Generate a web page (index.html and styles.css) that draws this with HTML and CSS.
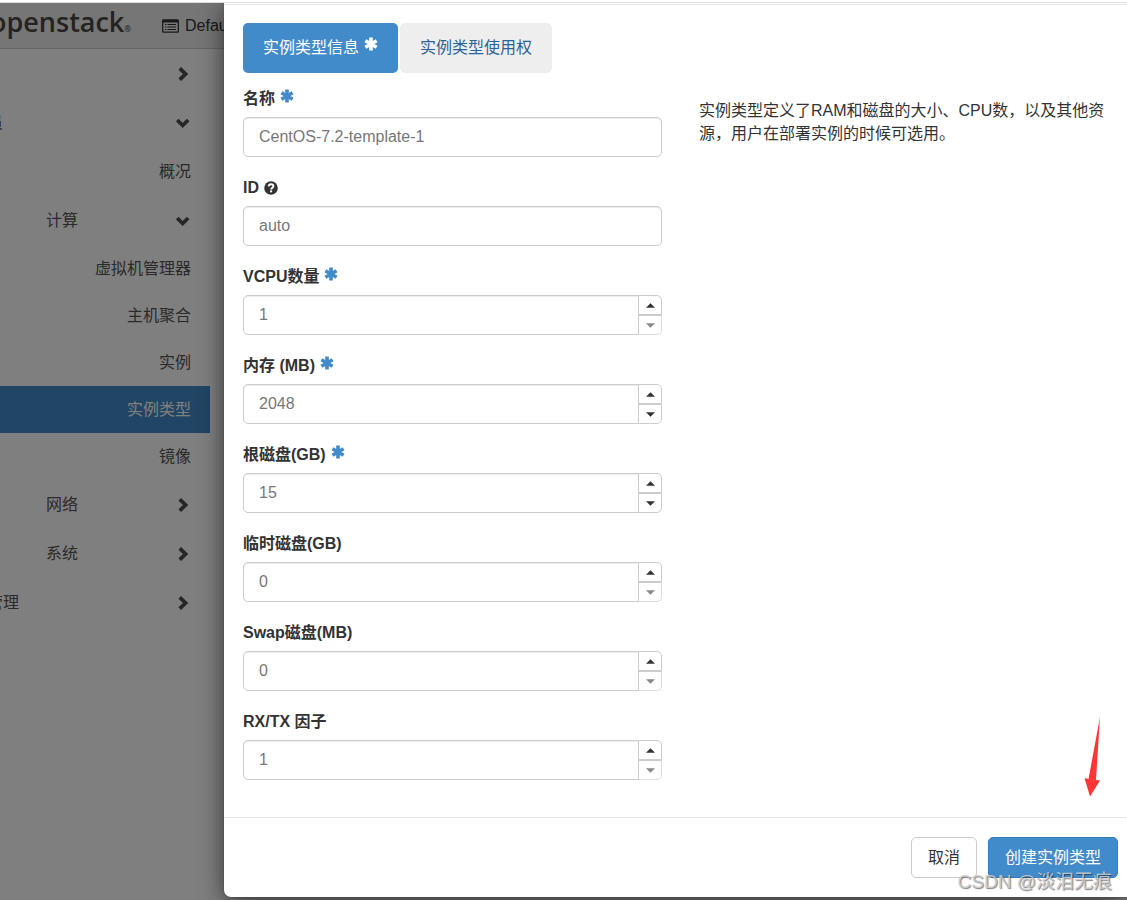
FILE: index.html
```
<!DOCTYPE html>
<html lang="zh-CN">
<head>
	<meta charset="UTF-8">
	<meta name="viewport" content="width=device-width, initial-scale=1">
	<title>创建实例类型</title>
	<link rel="stylesheet" href="styles.css">
</head>
<body>
	<!-- 公用图标 -->
	<svg class="sprite" aria-hidden="true">
		<symbol id="i-right" viewBox="0 0 12 14"><path d="M1.700 1.300 7.600 7l-5.900 5.700" fill="none" stroke="currentColor" stroke-width="3.700"/></symbol>
		<symbol id="i-down" viewBox="0 0 14 12"><path d="M1.200 3 6.700 8.500 12.200 3" fill="none" stroke="currentColor" stroke-width="3.700"/></symbol>
		<symbol id="i-star" viewBox="0 0 14 14"><path d="M7 .5v13M1.400 3.800l11.200 6.400M12.600 3.800 1.400 10.200" fill="none" stroke="currentColor" stroke-width="3.600"/></symbol>
		<symbol id="i-help" viewBox="0 0 14 14"><circle cx="7" cy="7" r="6.800" fill="currentColor"/><path d="M4.700 5.400C4.800 3.900 5.700 3.200 7 3.200c1.400 0 2.400.8 2.400 2 0 1.700-2.300 1.600-2.300 3.300" fill="none" stroke="#fff" stroke-width="1.900"/><path d="M6.100 9.400h2v1.900h-2z" fill="#fff"/></symbol>
		<symbol id="i-list" viewBox="0 0 17 14"><path d="M1.500 1h14a.8.8 0 0 1 .8.8v10.600a.8.8 0 0 1-.8.8h-14a.8.8 0 0 1-.8-.8V1.800a.8.8 0 0 1 .8-.8z" fill="none" stroke="currentColor" stroke-width="1.300"/><path d="M.8 1h15.400v2.500H.8z" fill="currentColor"/><path d="M3 5.500h1.500M3 8h1.500M3 10.500h1.500M5.500 5.500H14M5.500 8H14M5.500 10.500H14" stroke="currentColor" stroke-width="1.200"/></symbol>
		<symbol id="i-up-caret" viewBox="0 0 10 5"><path d="M0 5 5 0l5 5z" fill="currentColor"/></symbol>
		<symbol id="i-down-caret" viewBox="0 0 10 5"><path d="M0 0h10L5 5z" fill="currentColor"/></symbol>
	</svg>

	<div class="topline"></div>
	<div class="stage">
		<div class="page">
			<header class="navbar">
				<a class="brand" href="#">openstack<small>®</small></a>
				<a class="project" href="#"><svg><use href="#i-list"/></svg>Default</a>
			</header>
			<nav class="sidebar">
				<a class="group" href="#">项目<svg class="right"><use href="#i-right"/></svg></a>
				<a class="group" href="#">管理员<svg class="down"><use href="#i-down"/></svg></a>
				<a class="item overview" href="#">概况</a>
				<a class="group sub" href="#">计算<svg class="down"><use href="#i-down"/></svg></a>
				<a class="item" href="#">虚拟机管理器</a>
				<a class="item" href="#">主机聚合</a>
				<a class="item" href="#">实例</a>
				<a class="item active" href="#">实例类型</a>
				<a class="item" href="#">镜像</a>
				<a class="group sub" href="#">网络<svg class="right"><use href="#i-right"/></svg></a>
				<a class="group sub" href="#">系统<svg class="right"><use href="#i-right"/></svg></a>
				<a class="group" href="#">身份管理<svg class="right"><use href="#i-right"/></svg></a>
			</nav>
		</div>
		<div class="backdrop"></div>

		<form class="modal">
			<div class="modal-header"></div>
			<div class="modal-body">
				<div class="tabs">
					<button type="button" class="tab active">实例类型信息<svg class="star"><use href="#i-star"/></svg></button>
					<button type="button" class="tab">实例类型使用权</button>
				</div>
				<div class="columns">
					<div class="fields">
						<div class="field">
							<label for="name">名称<svg class="star"><use href="#i-star"/></svg></label>
							<input class="control" type="text" id="name" value="CentOS-7.2-template-1">
						</div>
						<div class="field">
							<label for="flavor_id">ID<svg class="help"><use href="#i-help"/></svg></label>
							<input class="control" type="text" id="flavor_id" value="auto">
						</div>
						<div class="field">
							<label for="vcpus">VCPU数量<svg class="star"><use href="#i-star"/></svg></label>
							<div class="spinner">
								<input class="control" type="number" id="vcpus" value="1" min="1">
								<div class="steps">
									<button type="button" aria-label="增加"><svg><use href="#i-up-caret"/></svg></button>
									<button type="button" aria-label="减少" disabled><svg><use href="#i-down-caret"/></svg></button>
								</div>
							</div>
						</div>
						<div class="field">
							<label for="memory">内存 (MB)<svg class="star"><use href="#i-star"/></svg></label>
							<div class="spinner">
								<input class="control" type="number" id="memory" value="2048" min="1">
								<div class="steps">
									<button type="button" aria-label="增加"><svg><use href="#i-up-caret"/></svg></button>
									<button type="button" aria-label="减少"><svg><use href="#i-down-caret"/></svg></button>
								</div>
							</div>
						</div>
						<div class="field">
							<label for="disk">根磁盘(GB)<svg class="star"><use href="#i-star"/></svg></label>
							<div class="spinner">
								<input class="control" type="number" id="disk" value="15" min="0">
								<div class="steps">
									<button type="button" aria-label="增加"><svg><use href="#i-up-caret"/></svg></button>
									<button type="button" aria-label="减少"><svg><use href="#i-down-caret"/></svg></button>
								</div>
							</div>
						</div>
						<div class="field">
							<label for="eph">临时磁盘(GB)</label>
							<div class="spinner">
								<input class="control" type="number" id="eph" value="0" min="0">
								<div class="steps">
									<button type="button" aria-label="增加"><svg><use href="#i-up-caret"/></svg></button>
									<button type="button" aria-label="减少" disabled><svg><use href="#i-down-caret"/></svg></button>
								</div>
							</div>
						</div>
						<div class="field">
							<label for="swap">Swap磁盘(MB)</label>
							<div class="spinner">
								<input class="control" type="number" id="swap" value="0" min="0">
								<div class="steps">
									<button type="button" aria-label="增加"><svg><use href="#i-up-caret"/></svg></button>
									<button type="button" aria-label="减少" disabled><svg><use href="#i-down-caret"/></svg></button>
								</div>
							</div>
						</div>
						<div class="field">
							<label for="rxtx">RX/TX 因子</label>
							<div class="spinner">
								<input class="control" type="number" id="rxtx" value="1" min="1">
								<div class="steps">
									<button type="button" aria-label="增加"><svg><use href="#i-up-caret"/></svg></button>
									<button type="button" aria-label="减少" disabled><svg><use href="#i-down-caret"/></svg></button>
								</div>
							</div>
						</div>
					</div>
					<p class="desc">实例类型定义了RAM和磁盘的大小、CPU数，以及其他资源，用户在部署实例的时候可选用。</p>
				</div>
			</div>
			<div class="modal-footer">
				<button type="button" class="btn">取消</button>
				<button type="submit" class="btn primary">创建实例类型</button>
			</div>
			<!-- 指向提交按钮的红色箭头 -->
			<svg class="arrow" viewBox="0 0 18 80" aria-hidden="true"><path d="M16 0 4.500 62 .5 61 6 79.500 16 63.500 12 63z" fill="#fe3636"/></svg>
			<span class="watermark">CSDN @淡泪无痕</span>
		</form>
	</div>
</body>
</html>
```
FILE: styles.css
```
*{
	box-sizing: border-box;
}
body{
	margin: 0;
	font: 16px/23px "Liberation Sans", "Noto Sans CJK SC", sans-serif;
	color: #333;
	background: #fff;
}
a{
	color: inherit;
	text-decoration: none;
}
button, input{
	font: inherit;
}
.sprite{
	display: none;
}
.topline{
	height: 3px;
	border-bottom: 1px solid #ddd;
}
.stage{
	position: relative;
	min-height: calc(100vh - 3px);
	padding: 0 0 3px 224px;
	overflow: hidden;
}

/* 背景页面，左侧有一部分在窗口外 */
.page{
	position: absolute;
	inset: 0 0 0 -65px;
	background: #fff;
}
.navbar{
	display: flex;
	align-items: center;
	height: 46px;
	background: #ededed;
	border-bottom: 1px solid #ccc;
}
.brand{
	width: 196px;
	text-align: right;
	font: 600 27px/40px "Open Sans", sans-serif;
	color: #4a4642;
}
.brand small{
	font-size: 8px;
}
.project{
	display: flex;
	align-items: center;
	gap: 6px;
	margin-left: 31px;
}
.project svg{
	width: 17px;
	height: 14px;
}
.sidebar{
	width: 275px;
	color: #555;
}
.group{
	display: flex;
	align-items: center;
	justify-content: space-between;
	height: 49px;
	padding: 0 20px;
}
.group svg{
	color: #4c4c4c;
}
.sub{
	padding-left: 111px;
}
.right{
	width: 12px;
	height: 14px;
}
.down{
	width: 14px;
	height: 12px;
}
.item{
	display: block;
	padding: 12px 19px;
	text-align: right;
}
.item.active{
	background: #428bca;
	color: #fff;
}
.overview{
	margin: 1px 0;
}
.backdrop{
	position: absolute;
	inset: 0;
	background: rgba(0,0,0,.5);
}

/* 对话框 */
.modal{
	position: relative;
	background: #fff;
	border-radius: 0 0 0 7px;
	box-shadow: 0 5px 24px rgba(0,0,0,.6), 0 0 1px rgba(0,0,0,.6);
}
.modal-header{
	height: 2px;
	border-bottom: 1px solid #e5e5e5;
}
.modal-body{
	padding: 18px 9px 17px 19px;
}
.tabs{
	display: flex;
	gap: 2px;
	margin-bottom: 15px;
}
.tab{
	padding: 13px 20px 14px;
	border: 0;
	border-radius: 5px;
	background: #eee;
	color: #2a6496;
}
.tab.active{
	background: #428bca;
	color: #fff;
}
.columns{
	display: grid;
	grid-template-columns: 1fr 1fr;
	gap: 37px;
}
.field{
	margin-bottom: 20px;
}
.field label{
	display: block;
	margin-bottom: 8px;
	font-weight: bold;
	line-height: 21px;
}
.star, .help{
	width: 14px;
	height: 14px;
	margin-left: 5px;
}
.star{
	color: #428bca;
	vertical-align: 1px;
}
.tab .star{
	color: #fff;
	vertical-align: 2px;
}
.help{
	vertical-align: -2px;
}
.control{
	display: block;
	width: 100%;
	height: 40px;
	padding: 0 15px;
	border: 1px solid #ccc;
	border-radius: 5px;
	background: #fff;
	box-shadow: inset 0 1px 1px rgba(0,0,0,.075);
	color: #777;
}
.spinner{
	display: flex;
}
.spinner .control{
	flex: 1;
	min-width: 0;
	border-radius: 5px 0 0 5px;
	appearance: textfield;
}
.control::-webkit-inner-spin-button{
	display: none;
}
.steps{
	display: flex;
	flex-direction: column;
	width: 24px;
	margin-left: -1px;
}
.steps button{
	display: flex;
	flex: 1;
	align-items: center;
	justify-content: center;
	padding: 0;
	border: 1px solid #ccc;
	border-radius: 0 5px 0 0;
	background: #fff;
	color: #333;
}
.steps button:last-child{
	border-radius: 0 0 5px 0;
}
.steps button:disabled{
	border-color: #ccc #ddd #ddd #ccc;
	color: #888;
}
.steps svg{
	width: 9px;
	height: 5px;
}
.desc{
	margin: 0;
	padding: 11px 6px 0 0;
}
.modal-footer{
	display: flex;
	justify-content: flex-end;
	gap: 11px;
	padding: 19px 9px;
	border-top: 1px solid #e5e5e5;
}
.btn{
	padding: 8px 16px;
	border: 1px solid #ccc;
	border-radius: 5px;
	background: #fff;
	color: #333;
}
.btn.primary{
	border-color: #357ebd;
	background: #428bca;
	color: #fff;
}
.arrow{
	position: absolute;
	right: 25px;
	bottom: 100px;
	width: 18px;
	height: 80px;
}
.watermark{
	position: absolute;
	right: 15px;
	bottom: 4px;
	font-size: 19px;
	color: rgba(205,205,205,.9);
	text-shadow: 1px 1px 1px rgba(0,0,0,.5);
}
```
